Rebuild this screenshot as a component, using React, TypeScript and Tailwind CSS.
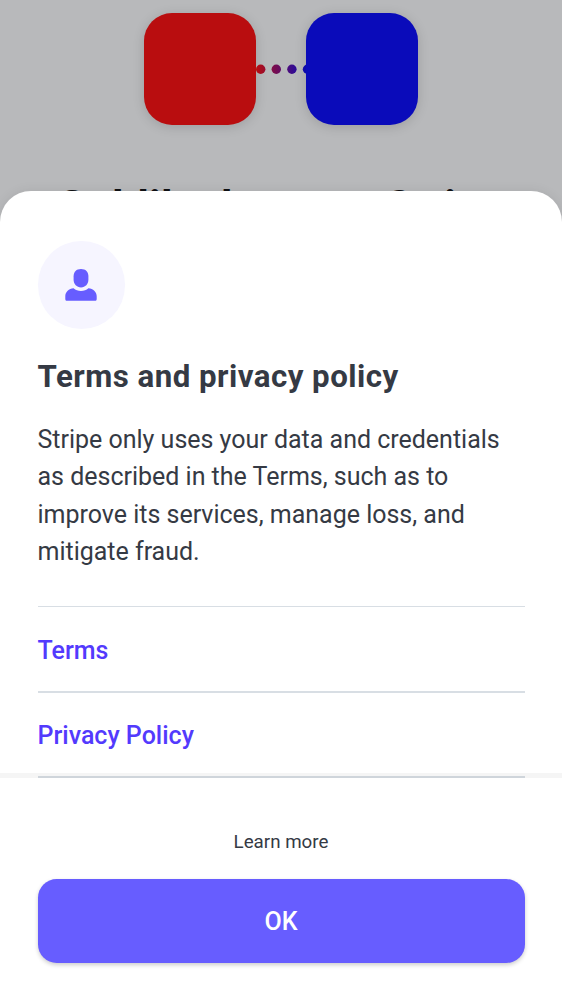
import React from "react";

const links = ["Terms", "Privacy Policy"];

function ConnectedApps() {
  return (
    <div className="flex justify-center pt-[12.5px]">
      <div className="size-[112.5px] rounded-[28px] bg-[#b90d0f] shadow-[0_2px_12px_rgba(0,0,0,0.15)]" />
      <svg className="h-[112.5px] w-[49.5px] overflow-visible" viewBox="0 0 49.5 112.5">
        <defs>
          <linearGradient id="trail" gradientUnits="userSpaceOnUse" x1="0" y1="0" x2="50" y2="0">
            <stop offset="0" stopColor="#b90d0f" />
            <stop offset="1" stopColor="#0a0bba" />
          </linearGradient>
        </defs>
        <g fill="url(#trail)">
          <circle cx="4.7" cy="56.3" r="4.7" />
          <circle cx="20.3" cy="56.3" r="4.7" />
          <circle cx="35.9" cy="56.3" r="4.7" />
          <circle cx="51.5" cy="56.3" r="4.7" />
        </g>
      </svg>
      <div className="relative size-[112.5px] rounded-[28px] bg-[#0a0bba] shadow-[0_2px_12px_rgba(0,0,0,0.15)]" />
    </div>
  );
}

function UserBadge() {
  return (
    <div className="flex size-[87.5px] items-center justify-center rounded-full bg-[#f6f5ff]">
      <svg className="h-8 w-8" viewBox="0 0 32 32" fill="#675dff">
        <path d="M16 0c4.6 0 7.4 2.8 7.4 7.2v3.3c0 4.600-3.100 7.900-7.400 7.900s-7.400-3.300-7.400-7.900V7.200C8.600 2.800 11.400 0 16 0Z" />
        <path d="M8.600 19.200c1.900 1.800 4.500 2.700 7.400 2.700s5.500-.9 7.400-2.700c4.700.5 8.300 3.500 8.300 8.100v2.600c0 1.300-.6 1.900-1.900 1.900H2.200C.9 31.800.3 31.200.3 29.900v-2.600c0-4.600 3.600-7.600 8.300-8.100Z" />
      </svg>
    </div>
  );
}

export default function App() {
  return (
    <div className="grid h-[1000px] w-full overflow-hidden bg-[#b8b9bb] font-['Roboto',sans-serif] text-[#353a44]">
      <div className="col-start-1 row-start-1 h-[1000px] overflow-hidden">
        <ConnectedApps />
        <h1 className="mt-[54px] px-[37.5px] text-center text-[43.75px] leading-[56px] font-bold tracking-[0.4px] text-[#101114]">
          Goldilocks uses Stripe to connect your accounts
        </h1>
      </div>
      <section className="z-10 col-start-1 row-start-1 mt-[191px] flex h-[809px] flex-col rounded-t-[31px] bg-white shadow-[0_0_12px_rgba(0,0,0,0.08)]">
        <div className="flex h-[587px] flex-col overflow-hidden border-b-0 px-[37.5px] pt-[50px]">
          <UserBadge />
          <h2 className="mt-[28px] text-[31.25px] leading-[40px] font-bold tracking-[0.47px]">
            Terms and privacy policy
          </h2>
          <p className="mt-[24px] text-[25px] leading-[37.5px] tracking-[-0.01px]">
            Stripe only uses your data and credentials as described in the Terms, such as to improve its services, manage loss, and mitigate fraud.
          </p>
          <div className="mt-[35.500px] border-t border-[#d8dee4]">
            {links.map((label) => (
              <a
                key={label}
                className="flex h-[85.500px] items-center border-b-2 border-[#d8dee4] pt-[3px] text-[25px] font-medium text-[#533afd]"
              >
                {label}
              </a>
            ))}
          </div>
        </div>
        <div className="z-10 -mt-[5px] h-[5px] shrink-0 bg-black/[0.04]" />
        <footer className="flex flex-col items-center px-[37.5px] pt-[49px]">
          <p className="text-[18.75px] leading-[30px]">Learn more</p>
          <button className="mt-[22px] flex h-[84px] w-full items-center justify-center rounded-[18.75px] bg-[#675dff] pt-[2px] text-[25px] font-medium text-white shadow-[0_2px_4px_rgba(0,0,0,0.2)]">
            OK
          </button>
        </footer>
      </section>
    </div>
  );
}
